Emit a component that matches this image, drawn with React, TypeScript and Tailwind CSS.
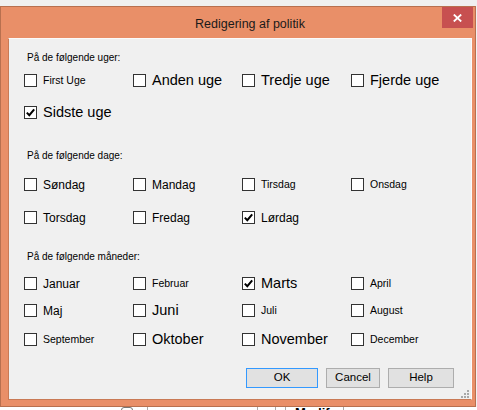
import { FunctionComponent } from "react";

type Size = "lg" | "md" | "sm";

interface Item {
	label: string;
	size: Size;
	checked?: boolean;
}

const sizeClass: Record<Size, string> = {
	lg: "text-[14.5px]",
	md: "text-[12px]",
	sm: "text-[10.5px]",
};

const weeks: Item[][] = [
	[
		{ label: "First Uge", size: "sm" },
		{ label: "Anden uge", size: "lg" },
		{ label: "Tredje uge", size: "lg" },
		{ label: "Fjerde uge", size: "lg" },
	],
	[{ label: "Sidste uge", size: "lg", checked: true }],
];

const days: Item[][] = [
	[
		{ label: "Søndag", size: "md" },
		{ label: "Mandag", size: "md" },
		{ label: "Tirsdag", size: "sm" },
		{ label: "Onsdag", size: "sm" },
	],
	[
		{ label: "Torsdag", size: "md" },
		{ label: "Fredag", size: "md" },
		{ label: "Lørdag", size: "md", checked: true },
	],
];

const months: Item[][] = [
	[
		{ label: "Januar", size: "md" },
		{ label: "Februar", size: "sm" },
		{ label: "Marts", size: "lg", checked: true },
		{ label: "April", size: "sm" },
	],
	[
		{ label: "Maj", size: "md" },
		{ label: "Juni", size: "lg" },
		{ label: "Juli", size: "sm" },
		{ label: "August", size: "sm" },
	],
	[
		{ label: "September", size: "sm" },
		{ label: "Oktober", size: "lg" },
		{ label: "November", size: "lg" },
		{ label: "December", size: "sm" },
	],
];

const CheckBox: FunctionComponent<Item> = ({ label, size, checked }) => (
	<div className="flex items-center gap-[6px] h-[13px]">
		<span className="w-[13px] h-[13px] shrink-0 border border-[#333] bg-white flex items-center justify-center">
			{checked ? (
				<svg width="11" height="11" viewBox="0 0 11 11">
					<path d="M1.8 5.6 L4.3 8.2 L9.2 2.4" fill="none" stroke="#000" strokeWidth="2" />
				</svg>
			) : null}
		</span>
		<span className={`${sizeClass[size]} leading-none whitespace-nowrap text-black`}>{label}</span>
	</div>
);

const Row = ({ items, className }: { items: Item[]; className: string }) => (
	<div className={`grid grid-cols-[109px_109px_109px_109px] h-[13px] ${className}`}>
		{items.map((it) => (
			<CheckBox key={it.label} {...it} />
		))}
	</div>
);

const Heading = ({ children, className }: { children: string; className: string }) => (
	<div className={`h-[12px] pl-[3px] text-[10px] leading-[12px] text-black ${className}`}>{children}</div>
);

const App = () => {
	return (
		<div className="w-[477px] h-[410px] bg-[#f0f0f0] overflow-hidden font-['Liberation_Sans',Arial,sans-serif]">
			<div className="mt-[6px] w-[476px] h-[401px] border border-[#b8704f] bg-[#e98f68] flex flex-col">
				{/* title bar */}
				<div className="relative h-[31px] flex items-center justify-center pl-[24px] pt-[3px]">
					<span className="text-[12.5px] text-[#1a1a1a]">Redigering af politik</span>
					<div className="absolute top-0 right-[2px] w-[31px] h-[21px] bg-[#c75050] flex items-center justify-center">
						<svg width="9" height="8" viewBox="0 0 9 8">
							<path d="M0.8 0.5 L8.2 7.5 M8.2 0.5 L0.8 7.5" stroke="#fff" strokeWidth="1.8" />
						</svg>
					</div>
				</div>

				{/* client area */}
				<div className="relative ml-[7px] w-[464px] h-[362px] bg-[#f0f0f0] border-t border-r border-t-[#fbfbfb] border-r-[#fbfbfb] border-l border-b border-l-[#c97a55] border-b-[#c97a55] flex flex-col pl-[15px] pt-[13px]">
					<Heading className="">På de følgende uger:</Heading>
					<Row items={weeks[0]} className="mt-[10px]" />
					<Row items={weeks[1]} className="mt-[19px]" />

					<Heading className="mt-[31px]">På de følgende dage:</Heading>
					<Row items={days[0]} className="mt-[16px]" />
					<Row items={days[1]} className="mt-[20px]" />

					<Heading className="mt-[27px]">På de følgende måneder:</Heading>
					<Row items={months[0]} className="mt-[14px]" />
					<Row items={months[1]} className="mt-[14px]" />
					<Row items={months[2]} className="mt-[16px]" />

					<div className="mt-[22px] flex justify-end gap-[8px] pr-[17px]">
						<button className="w-[72px] h-[20px] border border-[#3399ff] bg-[#e1e1e1] text-[11.5px] text-black leading-none">
							OK
						</button>
						<button className="w-[54px] h-[20px] border border-[#adadad] bg-[#e1e1e1] text-[11.5px] text-black leading-none">
							Cancel
						</button>
						<button className="w-[66px] h-[20px] border border-[#adadad] bg-[#e1e1e1] text-[11.5px] text-black leading-none">
							Help
						</button>
					</div>

					{/* size grip */}
					<svg className="absolute right-[2px] bottom-[1px]" width="8" height="8" viewBox="0 0 8 8">
						<g fill="#a8a8a8">
							<rect x="6" y="0" width="2" height="2" />
							<rect x="3" y="3" width="2" height="2" />
							<rect x="6" y="3" width="2" height="2" />
							<rect x="0" y="6" width="2" height="2" />
							<rect x="3" y="6" width="2" height="2" />
							<rect x="6" y="6" width="2" height="2" />
						</g>
					</svg>
				</div>
			</div>

			{/* window behind, peeking out */}
			<div className="h-[3px] bg-white flex overflow-hidden">
				<div className="ml-[121px] w-[12px] h-[6px] border border-[#777] rounded-full" />
				<div className="ml-[14px] w-px bg-[#aaa]" />
				<div className="ml-[109px] w-px bg-[#aaa]" />
				<div className="ml-[17px] w-px bg-[#aaa]" />
				<div className="ml-[9px] w-px bg-[#aaa]" />
				<span className="ml-[9px] text-[13px] font-bold leading-none -mt-[1px] text-black">Modify</span>
				<div className="ml-[6px] w-px bg-[#aaa]" />
			</div>
		</div>
	);
};

export default App;
